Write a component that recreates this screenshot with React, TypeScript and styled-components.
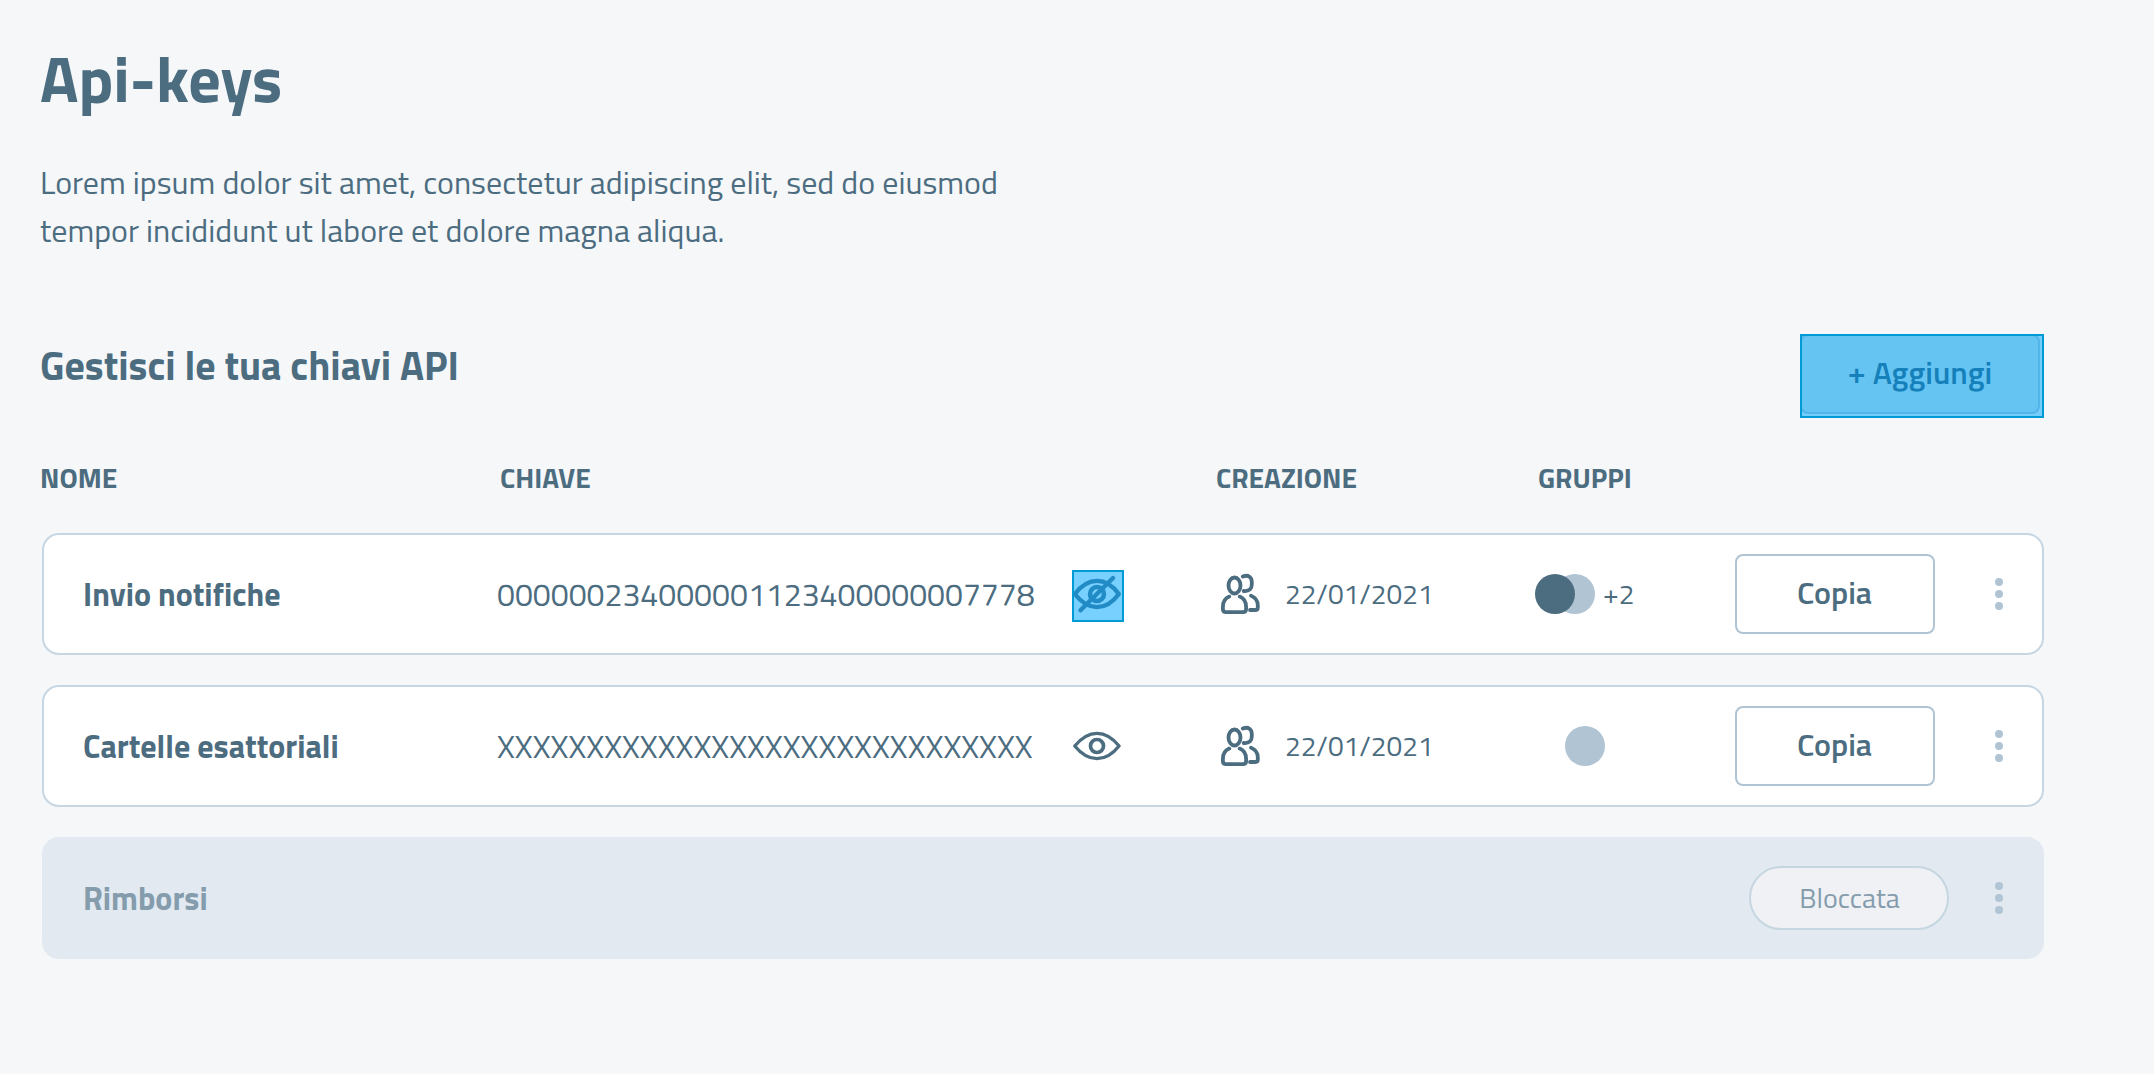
import React from "react";
import styled, { createGlobalStyle, css } from "styled-components";

const color = {
  page: "#f5f7f9",
  ink: "#4c6c80",
  inkMuted: "#849cac",
  line: "#c6d6e2",
  control: "#b0c4d4",
  blocked: "#e2e9f1",
  badge: "#eff1f5",
};

const GlobalStyle = createGlobalStyle`
  *, *::before, *::after { box-sizing: border-box; }
  body {
    margin: 0;
    background: ${color.page};
    color: ${color.ink};
    font-family: "Titillium Web", Lato, Roboto, sans-serif;
    -webkit-font-smoothing: antialiased;
  }
`;

const Page = styled.main`
  min-height: 1074px;
  padding: 46px 110px 0 40px;
`;

const Title = styled.h1`
  margin: 0 0 48px;
  font-size: 64px;
  font-weight: 700;
  line-height: 64px;
`;

const Intro = styled.p`
  margin: 0 0 80px;
  width: 1000px;
  font-size: 32px;
  line-height: 48px;
  letter-spacing: 0.01px;
`;

const SectionHeader = styled.header`
  display: flex;
  justify-content: space-between;
  align-items: flex-start;
  height: 84px;
`;

const SectionTitle = styled.h2`
  margin: 8px 0 0;
  font-size: 40px;
  font-weight: 700;
  line-height: 48px;
`;

const highlight = css`
  outline: 2px solid #009ad6;
  outline-offset: -2px;
`;

const AddFrame = styled.div`
  ${highlight}
  width: 244px;
  height: 84px;
  background: #74cdfb;
`;

const buttonBase = css`
  display: flex;
  align-items: center;
  justify-content: center;
  height: 80px;
  padding: 0 0 4px;
  border-radius: 8px;
  font: inherit;
  font-size: 32px;
  font-weight: 600;
  line-height: 48px;
`;

const AddButton = styled.button`
  ${buttonBase}
  width: 240px;
  border: 2px solid #52b5e9;
  background: #66c4f3;
  color: #1580ba;
`;

const TableHead = styled.div`
  display: grid;
  grid-template-columns: 460px 716px 322px 1fr;
  margin: 40px 0 35px;
  font-size: 28px;
  font-weight: 700;
  line-height: 40px;
`;

const List = styled.div`
  display: flex;
  flex-direction: column;
  gap: 30px;
  padding-left: 2px;
`;

const Card = styled.article<{ $blocked?: boolean }>`
  display: grid;
  grid-template-columns: 414px 575px 149px 314px 200px 260px 8px;
  align-items: center;
  height: 122px;
  padding: 0 39px 0 39px;
  border: 2px solid ${(p) => (p.$blocked ? color.blocked : color.line)};
  border-radius: 17px;
  background: ${(p) => (p.$blocked ? color.blocked : "#fff")};
`;

const Name = styled.div<{ $muted?: boolean }>`
  font-size: 32px;
  font-weight: 700;
  line-height: 48px;
  color: ${(p) => (p.$muted ? color.inkMuted : "inherit")};
`;

const KeyText = styled.div`
  font-size: 32px;
  font-weight: 400;
  line-height: 48px;
`;

const EyeToggle = styled.button<{ $selected?: boolean }>`
  display: block;
  width: 52px;
  height: 52px;
  margin: 4px 0 0;
  padding: 0;
  border: 0;
  background: none;
  color: inherit;
  ${(p) =>
    p.$selected &&
    css`
      ${highlight}
      background: #77d0fd;
      color: #218bc5;
    `}
  svg {
    display: block;
  }
`;

const Creation = styled.div`
  display: flex;
  align-items: center;
  gap: 23px;
  margin-left: -1px;
  font-size: 28px;
  font-weight: 400;
  line-height: 40px;
`;

const Groups = styled.div<{ $single?: boolean }>`
  display: flex;
  align-items: center;
  padding-left: ${(p) => (p.$single ? "30px" : "0")};
  font-size: 28px;
  line-height: 40px;
`;

const GroupDot = styled.span<{ $dark?: boolean }>`
  width: 40px;
  height: 40px;
  border-radius: 50%;
  background: ${(p) => (p.$dark ? color.ink : color.control)};
  position: relative;
  z-index: ${(p) => (p.$dark ? 1 : 0)};
  & + & {
    margin-left: -20px;
  }
`;

const More = styled.span`
  margin-left: 8px;
`;

const CopyButton = styled.button`
  ${buttonBase}
  width: 200px;
  padding-right: 1px;
  border: 2px solid ${color.control};
  background: #fff;
  color: ${color.ink};
`;

const Badge = styled.div`
  grid-column: 6;
  display: flex;
  align-items: center;
  justify-content: center;
  width: 200px;
  height: 64px;
  margin-left: 14px;
  padding-left: 1px;
  border: 2px solid #c5d6e0;
  border-radius: 32px;
  background: ${color.badge};
  color: ${color.inkMuted};
  font-size: 28px;
  font-weight: 400;
  line-height: 40px;
`;

const Kebab = styled.div`
  grid-column: 7;
  display: flex;
  flex-direction: column;
  gap: 4px;
`;

const KebabDot = styled.i`
  width: 8px;
  height: 8px;
  border-radius: 50%;
  background: ${color.control};
`;

const Menu = () => (
  <Kebab>
    <KebabDot />
    <KebabDot />
    <KebabDot />
  </Kebab>
);

const EyeIcon = () => (
  <svg width="52" height="52" viewBox="0 0 52 52" fill="none" stroke="currentColor" strokeLinejoin="round">
    <path strokeWidth="3.3" d="M2.7 24C9 16.4 17 11.3 25 11.3S41 16.4 47.1 24C41 31.6 33 36.7 25 36.7S9 31.6 2.7 24Z" />
    <circle strokeWidth="3.7" cx="25" cy="24" r="6.5" />
  </svg>
);

const EyeOffIcon = () => (
  <svg width="52" height="52" viewBox="0 0 52 52" fill="none" stroke="currentColor" strokeLinejoin="round" strokeLinecap="round">
    <path strokeWidth="4.3" d="M2.8 24C9 16 17 10.9 25 10.9S41 16 46.8 24C41 32 33 37.1 25 37.1S9 32 2.8 24Z" />
    <circle strokeWidth="4.5" cx="25" cy="24" r="7" />
    <path strokeWidth="4.4" d="M8.5 40.3 41 8" />
  </svg>
);

const UsersIcon = () => (
  <svg width="42" height="42" viewBox="0 0 42 42" fill="none" stroke="currentColor" strokeWidth="3.8" strokeLinecap="round" strokeLinejoin="round">
    <ellipse cx="14.5" cy="12.5" rx="6" ry="8" />
    <path d="M9.3 23.6C5 25.4 2.9 29.2 2.9 34V36.2Q2.9 39.1 6 39.1H23Q26.1 39.1 26.1 36.2V34C26.1 29.2 24 25.4 19.7 23.6" />
    <path d="M22.8 3.6C28.5 1.2 31.8 4.5 31.8 9V11.2C31.8 15.6 29.5 18.6 23.7 18" />
    <path d="M31 22.8C35.5 24.6 37.8 28 37.8 32.5V34.4Q37.8 37 35 37H30" />
  </svg>
);

type ApiKey = {
  name: string;
  value?: string;
  visible?: boolean;
  created?: string;
  extraGroups?: number;
};

const keys: ApiKey[] = [
  { name: "Invio notifiche", value: "000000234000001123400000007778", visible: true, created: "22/01/2021", extraGroups: 2 },
  { name: "Cartelle esattoriali", value: "X".repeat(30), created: "22/01/2021" },
  { name: "Rimborsi" },
];

const KeyRow = ({ item }: { item: ApiKey }) => {
  if (!item.value) {
    return (
      <Card $blocked>
        <Name $muted>{item.name}</Name>
        <Badge>Bloccata</Badge>
        <Menu />
      </Card>
    );
  }
  return (
    <Card>
      <Name>{item.name}</Name>
      <KeyText>{item.value}</KeyText>
      <EyeToggle $selected={item.visible}>{item.visible ? <EyeOffIcon /> : <EyeIcon />}</EyeToggle>
      <Creation>
        <UsersIcon />
        <span>{item.created}</span>
      </Creation>
      <Groups $single={!item.extraGroups}>
        {item.extraGroups && <GroupDot $dark />}
        <GroupDot />
        {item.extraGroups && <More>+{item.extraGroups}</More>}
      </Groups>
      <CopyButton>Copia</CopyButton>
      <Menu />
    </Card>
  );
};

export default function App() {
  return (
    <>
      <GlobalStyle />
      <Page>
        <Title>Api-keys</Title>
        <Intro>
          Lorem ipsum dolor sit amet, consectetur adipiscing elit, sed do eiusmod tempor incididunt ut labore et dolore
          magna aliqua.
        </Intro>
        <SectionHeader>
          <SectionTitle>Gestisci le tua chiavi API</SectionTitle>
          <AddFrame>
            <AddButton>+ Aggiungi</AddButton>
          </AddFrame>
        </SectionHeader>
        <TableHead>
          <span>NOME</span>
          <span>CHIAVE</span>
          <span>CREAZIONE</span>
          <span>GRUPPI</span>
        </TableHead>
        <List>
          {keys.map((item) => (
            <KeyRow key={item.name} item={item} />
          ))}
        </List>
      </Page>
    </>
  );
}
